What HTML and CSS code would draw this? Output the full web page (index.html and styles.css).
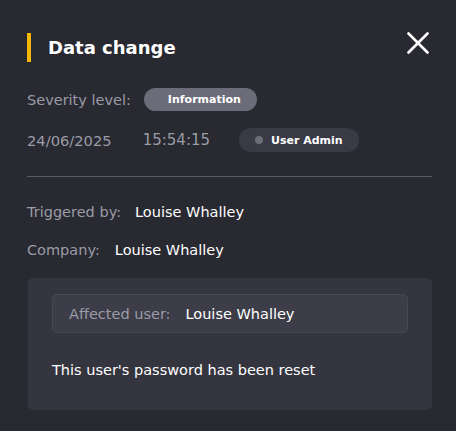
FILE: index.html
```html
<!DOCTYPE html>
<html>
<head>
<meta charset="utf-8">
<link rel="stylesheet" href="styles.css">
</head>
<body>
<div class="panel">
  <div class="header">
    <h1 class="title">Data change</h1>
    <button class="close" aria-label="Close">
      <svg width="22" height="22" viewBox="0 0 22 22"><path d="M1.5 1.5 L20.5 20.5 M20.5 1.5 L1.5 20.5" stroke="#ffffff" stroke-width="2.6" stroke-linecap="round" fill="none"/></svg>
    </button>
  </div>
  <div class="row sev">
    <span class="label">Severity level:</span>
    <span class="pill info">Information</span>
  </div>
  <div class="row meta">
    <span class="label date">24/06/2025</span>
    <span class="label time">15:54:15</span>
    <span class="pill user"><span class="dot"></span>User Admin</span>
  </div>
  <hr class="divider">
  <div class="row field trig"><span class="label">Triggered by:</span><span class="value">Louise Whalley</span></div>
  <div class="row field comp"><span class="label">Company:</span><span class="value">Louise Whalley</span></div>
  <div class="box">
    <div class="affected"><span class="label">Affected user:</span><span class="value">Louise Whalley</span></div>
    <p class="message">This user's password has been reset</p>
  </div>
</div>
</body>
</html>
```
FILE: styles.css
```css
html, body { margin: 0; padding: 0; }
body {
  background: #282931;
  font-family: "DejaVu Sans", Verdana, sans-serif;
  color: #ffffff;
  width: 456px;
  height: 431px;
  overflow: hidden;
}
.panel { padding: 33px 24px 0 27px; }
.header {
  display: flex;
  align-items: flex-start;
  justify-content: space-between;
}
.title {
  margin: 0;
  font-size: 18px;
  font-weight: bold;
  line-height: 29px;
  border-left: 4px solid #f5b800;
  padding-left: 17px;
}
.close {
  background: none;
  border: 0;
  padding: 0;
  margin: -1px 3px 0 0;
  width: 22px;
  height: 22px;
  display: block;
}
.close svg { display: block; }
.row { display: flex; align-items: center; }
.label { color: #9b9ba6; font-size: 14.5px; }
.value { color: #ffffff; font-size: 14.5px; }
.sev { margin-top: 26px; gap: 13px; height: 23px; }
.pill {
  font-size: 11px;
  font-weight: bold;
  border-radius: 12px;
  display: inline-flex;
  align-items: center;
}
.info { background: #6b6b79; height: 23px; padding: 0 16px 0 24px; }
.meta { margin-top: 17px; height: 24px; }
.date { font-size: 14.7px; }
.time { font-size: 15px; margin-left: 31px; }
.user { background: #393a45; height: 24px; margin-left: 29px; padding: 0 16px 0 16px; }
.dot { width: 8px; height: 8px; border-radius: 50%; background: #6e6e7b; margin-right: 8px; }
.divider { border: 0; border-top: 1px solid #5c5c68; margin: 24px 0 0 0; }
.field { height: 20px; gap: 14px; }
.trig { margin-top: 25px; }
.comp { margin-top: 18px; gap: 15px; }
.box {
  margin-top: 18px;
  margin-left: 1px;
  background: #34353f;
  border-radius: 5px;
  padding: 16px 24px 0 24px;
  height: 116px;
}
.affected {
  display: flex;
  align-items: center;
  gap: 15px;
  height: 37px;
  padding-left: 16px;
  background: #3c3d48;
  border: 1px solid #474853;
  border-radius: 5px;
}
.message { margin: 29px 0 0 0; font-size: 14.5px; }
```
